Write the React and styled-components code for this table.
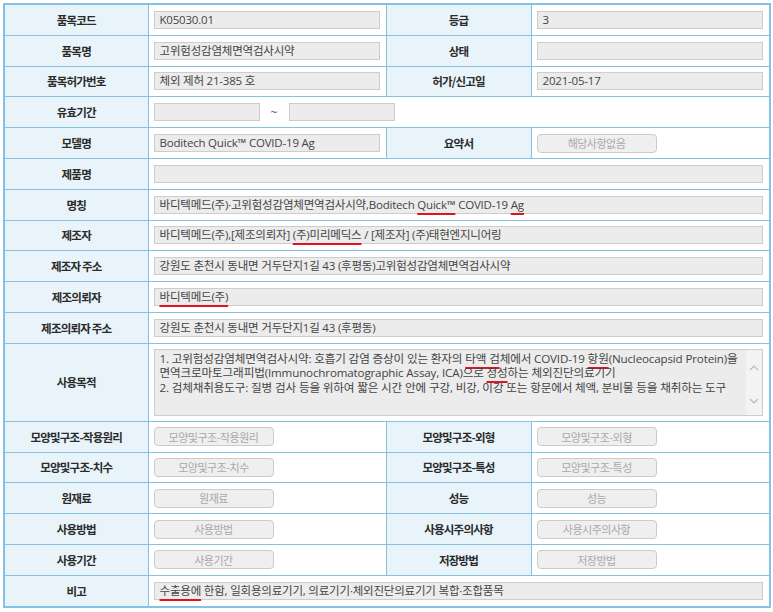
import React from 'react';
import styled, { createGlobalStyle } from 'styled-components';

const GlobalStyle = createGlobalStyle`
    body {
        margin: 0;
        background: #fff;
        font-family: "Open Sans", "Noto Sans CJK KR", sans-serif;
    }
`;

const LINE = '#86c1e3';

const Page = styled.div`
    padding: 3px 3px 4px 3px;
`;

const Table = styled.table`
    width: 766px;
    border-collapse: collapse;
    table-layout: fixed;
    border: 2px solid ${LINE};
`;

const Label = styled.th`
    height: 29.8px;
    padding: 0;
    background: #e9f4fa;
    border: 1px solid ${LINE};
    color: #2b2b2b;
    font-family: "Noto Sans CJK KR", sans-serif;
    font-size: 11.5px;
    font-weight: 700;
    letter-spacing: -0.8px;
    text-align: center;
    vertical-align: middle;
`;

const Cell = styled.td`
    padding: 0 6px 0 5px;
    border: 1px solid ${LINE};
    vertical-align: middle;
`;

const Field = styled.div`
    box-sizing: border-box;
    width: ${props => props.$width || '100%'};
    height: 18px;
    padding: 0 5px;
    background: #ececec;
    border: 1px solid #cdcdcd;
    color: #444;
    font-size: 11.5px;
    line-height: 16px;
    white-space: nowrap;
    letter-spacing: -0.2px;
`;

const Range = styled.div`
    display: flex;
    align-items: center;
`;

const Tilde = styled.span`
    width: 29px;
    text-align: center;
    color: #666;
    font-size: 12px;
`;

const GhostButton = styled.div`
    box-sizing: border-box;
    width: 120px;
    height: 19px;
    display: flex;
    align-items: center;
    justify-content: center;
    background: #efefef;
    border: 1px solid #cbcbcb;
    border-radius: 4px;
    color: #a9a9a9;
    font-family: "Noto Sans CJK KR", sans-serif;
    font-size: 11px;
    letter-spacing: -0.5px;
`;

const Memo = styled.div`
    box-sizing: border-box;
    height: 67px;
    display: flex;
    background: #ececec;
    border: 1px solid #cdcdcd;
    margin: 5px 0;
`;

const MemoText = styled.div`
    flex: 1;
    padding: 2px 5px;
    color: #444;
    font-size: 11.6px;
    line-height: 14.5px;
    white-space: nowrap;
    letter-spacing: -0.15px;
`;

const ScrollTrack = styled.div`
    width: 16px;
    background: #f3f3f3;
    display: flex;
    flex-direction: column;
    justify-content: space-between;
    align-items: center;
    padding: 14px 0 10px;
`;

const Mark = styled.span`
    text-decoration: underline;
    text-decoration-color: #e0141e;
    text-decoration-thickness: 2px;
    text-underline-offset: 4px;
    text-decoration-skip-ink: none;
`;

const Chevron = ({ up }) => (
    <svg width="10" height="7" viewBox="0 0 10 7">
        <path
            d={up ? 'M1 6 L5 2 L9 6' : 'M1 1 L5 5 L9 1'}
            fill="none"
            stroke="#b9b9b9"
            strokeWidth="1.2"
        />
    </svg>
);

const App = () => {
    return (
        <Page>
            <GlobalStyle />
            <Table>
                <colgroup>
                    <col style={{ width: 144 }} />
                    <col style={{ width: 238 }} />
                    <col style={{ width: 145 }} />
                    <col style={{ width: 239 }} />
                </colgroup>
                <tbody>
                    <tr>
                        <Label>품목코드</Label>
                        <Cell><Field>K05030.01</Field></Cell>
                        <Label>등급</Label>
                        <Cell><Field>3</Field></Cell>
                    </tr>
                    <tr>
                        <Label>품목명</Label>
                        <Cell><Field>고위험성감염체면역검사시약</Field></Cell>
                        <Label>상태</Label>
                        <Cell><Field /></Cell>
                    </tr>
                    <tr>
                        <Label>품목허가번호</Label>
                        <Cell><Field>체외 제허 21-385 호</Field></Cell>
                        <Label>허가/신고일</Label>
                        <Cell><Field>2021-05-17</Field></Cell>
                    </tr>
                    <tr>
                        <Label>유효기간</Label>
                        <Cell colSpan={3}>
                            <Range>
                                <Field $width="106px" />
                                <Tilde>~</Tilde>
                                <Field $width="106px" />
                            </Range>
                        </Cell>
                    </tr>
                    <tr>
                        <Label>모델명</Label>
                        <Cell><Field>Boditech Quick™ COVID-19 Ag</Field></Cell>
                        <Label>요약서</Label>
                        <Cell><GhostButton>해당사항없음</GhostButton></Cell>
                    </tr>
                    <tr>
                        <Label>제품명</Label>
                        <Cell colSpan={3}><Field /></Cell>
                    </tr>
                    <tr>
                        <Label>명칭</Label>
                        <Cell colSpan={3}>
                            <Field>
                                바디텍메드(주)·고위험성감염체면역검사시약,Boditech <Mark>Quick™</Mark> COVID-19 <Mark>Ag</Mark>
                            </Field>
                        </Cell>
                    </tr>
                    <tr>
                        <Label>제조자</Label>
                        <Cell colSpan={3}>
                            <Field>
                                바디텍메드(주),[제조의뢰자] <Mark>(주)미리메딕스</Mark> / [제조자] (주)태현엔지니어링
                            </Field>
                        </Cell>
                    </tr>
                    <tr>
                        <Label>제조자 주소</Label>
                        <Cell colSpan={3}>
                            <Field>강원도 춘천시 동내면 거두단지1길 43 (후평동)고위험성감염체면역검사시약</Field>
                        </Cell>
                    </tr>
                    <tr>
                        <Label>제조의뢰자</Label>
                        <Cell colSpan={3}>
                            <Field><Mark>바디텍메드(주)</Mark></Field>
                        </Cell>
                    </tr>
                    <tr>
                        <Label>제조의뢰자 주소</Label>
                        <Cell colSpan={3}>
                            <Field>강원도 춘천시 동내면 거두단지1길 43 (후평동)</Field>
                        </Cell>
                    </tr>
                    <tr>
                        <Label>사용목적</Label>
                        <Cell colSpan={3}>
                            <Memo>
                                <MemoText>
                                    1. 고위험성감염체면역검사시약: 호흡기 감염 증상이 있는 환자의 <Mark>타액 검</Mark>체에서 COVID-19 <Mark>항원</Mark>(Nucleocapsid Protein)을
                                    <br />
                                    면역크로마토그래피법(Immunochromatographic Assay, ICA)으로 <Mark>정성</Mark>하는 체외진단의료기기
                                    <br />
                                    2. 검체채취용도구: 질병 검사 등을 위하여 짧은 시간 안에 구강, 비강, 이강 또는 항문에서 체액, 분비물 등을 채취하는 도구
                                </MemoText>
                                <ScrollTrack>
                                    <Chevron up />
                                    <Chevron />
                                </ScrollTrack>
                            </Memo>
                        </Cell>
                    </tr>
                    <tr>
                        <Label>모양및구조-작용원리</Label>
                        <Cell><GhostButton>모양및구조-작용원리</GhostButton></Cell>
                        <Label>모양및구조-외형</Label>
                        <Cell><GhostButton>모양및구조-외형</GhostButton></Cell>
                    </tr>
                    <tr>
                        <Label>모양및구조-치수</Label>
                        <Cell><GhostButton>모양및구조-치수</GhostButton></Cell>
                        <Label>모양및구조-특성</Label>
                        <Cell><GhostButton>모양및구조-특성</GhostButton></Cell>
                    </tr>
                    <tr>
                        <Label>원재료</Label>
                        <Cell><GhostButton>원재료</GhostButton></Cell>
                        <Label>성능</Label>
                        <Cell><GhostButton>성능</GhostButton></Cell>
                    </tr>
                    <tr>
                        <Label>사용방법</Label>
                        <Cell><GhostButton>사용방법</GhostButton></Cell>
                        <Label>사용시주의사항</Label>
                        <Cell><GhostButton>사용시주의사항</GhostButton></Cell>
                    </tr>
                    <tr>
                        <Label>사용기간</Label>
                        <Cell><GhostButton>사용기간</GhostButton></Cell>
                        <Label>저장방법</Label>
                        <Cell><GhostButton>저장방법</GhostButton></Cell>
                    </tr>
                    <tr>
                        <Label>비고</Label>
                        <Cell colSpan={3}>
                            <Field>
                                <Mark>수출용에</Mark> 한함, 일회용의료기기, 의료기기·체외진단의료기기 복합·조합품목
                            </Field>
                        </Cell>
                    </tr>
                </tbody>
            </Table>
        </Page>
    );
};

export default App;
